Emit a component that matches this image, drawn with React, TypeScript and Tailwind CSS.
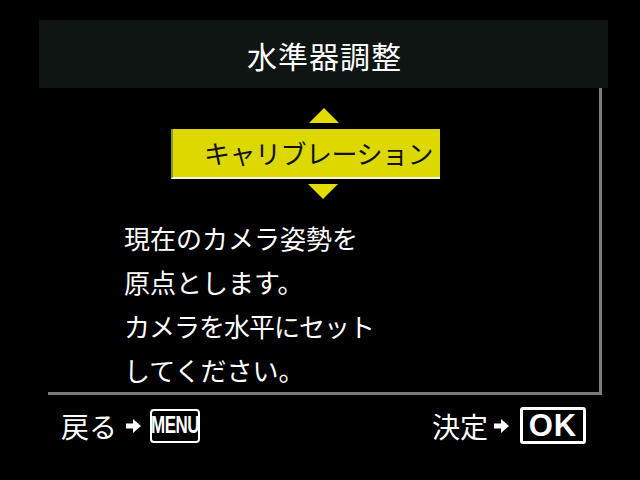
const jp = { fontFamily: '"Noto Sans CJK JP", "Noto Sans", sans-serif' };

const Arrow = () => (
  <svg width="15" height="14" viewBox="0 0 15 14" className="shrink-0">
    <path d="M0 4.5 H7 V0 L15 7 L7 14 V9.5 H0 Z" fill="#ffffff" />
  </svg>
);

const Triangle = ({ down }: { down?: boolean }) => (
  <svg width="30" height="15" viewBox="0 0 30 15" className="block">
    {down ? <path d="M0 0 H30 L15 15 Z" fill="#e2dc00" /> : <path d="M15 0 L30 15 H0 Z" fill="#e2dc00" />}
  </svg>
);

export default function App() {
  return (
    <div className="w-[640px] h-[480px] bg-black overflow-hidden text-white" style={jp}>
      <div className="pt-[20px] pl-[39px]">
        <div className="w-[569px] h-[68px] bg-[#0e1513] flex items-center justify-center">
          <span className="text-[30px] leading-none tracking-[1px] ml-[2px] mt-[2px]">水準器調整</span>
        </div>
        <div className="ml-[9px] w-[554px] h-[307px] border-r-[3px] border-b-[3px] border-[#7c7c7c] flex flex-col">
          <div className="ml-[261px] mt-[20px]">
            <Triangle />
          </div>
          <div className="ml-[123px] mt-[6px] w-[269px] h-[55px] bg-[#dcd800] border-b-[2px] border-[#f4f4e0] border-l-[2px] border-l-[#8a9a20] flex items-center pl-[31px]">
            <span className="text-[26px] leading-none text-[#111] tracking-[-0.5px]">キャリブレーション</span>
          </div>
          <div className="ml-[260px] mt-[5px]">
            <Triangle down />
          </div>
          <div className="ml-[76px] mt-[17px] text-[26px] leading-[44px]">
            <div>現在のカメラ姿勢を</div>
            <div>原点とします。</div>
            <div className="tracking-[-1px]">カメラを水平にセット</div>
            <div>してください。</div>
          </div>
        </div>
      </div>
      <div className="flex items-center justify-between pl-[61px] pr-[54px] mt-[12px]">
        <div className="flex items-center">
          <span className="text-[28px] leading-none">戻る</span>
          <span className="ml-[9px]"><Arrow /></span>
          <div className="ml-[9px] w-[50px] h-[34px] border-[2px] border-white rounded-[4px] flex items-center justify-center">
            <span
              className="text-[17px] font-bold leading-none scale-y-[1.45] tracking-[-0.5px]"
              style={{ fontFamily: '"Liberation Sans", Arial, sans-serif' }}
            >
              MENU
            </span>
          </div>
        </div>
        <div className="flex items-center">
          <span className="text-[28px] leading-none">決定</span>
          <span className="ml-[6px]"><Arrow /></span>
          <div className="ml-[11px] w-[66px] h-[37px] border-[3px] border-white rounded-[3px] flex items-center justify-center">
            <span
              className="text-[31px] font-bold leading-none tracking-[1px]"
              style={{ fontFamily: '"Liberation Sans", Arial, sans-serif' }}
            >
              OK
            </span>
          </div>
        </div>
      </div>
    </div>
  );
}
